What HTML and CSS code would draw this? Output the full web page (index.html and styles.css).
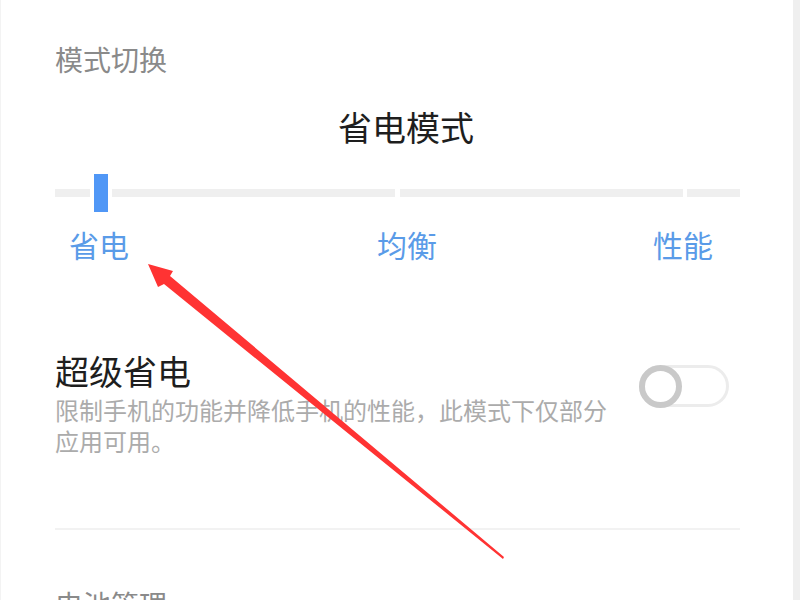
FILE: index.html
```html
<!DOCTYPE html>
<html lang="zh-CN">
<head>
    <meta charset="UTF-8">
    <meta name="viewport" content="width=device-width, initial-scale=1.0">
    <title>省电模式</title>
    <link rel="stylesheet" href="styles.css">
</head>
<body>
    <div class="page">
        <div class="section-title">模式切换</div>

        <div class="mode-name">省电模式</div>

        <div class="slider">
            <div class="track">
                <span class="seg seg-start"></span>
                <span class="thumb"></span>
                <span class="seg seg-a"></span>
                <span class="seg seg-b"></span>
                <span class="seg seg-c"></span>
            </div>
            <div class="labels">
                <span class="label-save">省电</span>
                <span class="label-balance">均衡</span>
                <span class="label-perf">性能</span>
            </div>
        </div>

        <div class="option">
            <div class="option-text">
                <div class="option-title">超级省电</div>
                <div class="option-desc">限制手机的功能并降低手机的性能，此模式下仅部分应用可用。</div>
            </div>
            <div class="switch">
                <span class="knob"></span>
            </div>
        </div>

        <div class="divider"></div>

        <div class="section-title section-bottom">电池管理</div>
    </div>

    <!-- annotation arrow drawn over the screenshot -->
    <svg class="arrow" width="800" height="600" viewBox="0 0 800 600">
        <polygon fill="#ff3333" points="148,264 173,271 170,276 504,557 503,559 164,284 158,287"/>
    </svg>
</body>
</html>
```

FILE: styles.css
```css
* {
    margin: 0;
    padding: 0;
    box-sizing: border-box;
}

body {
    font-family: "Noto Sans CJK SC", "Noto Sans", sans-serif;
    background: white;
    width: 800px;
    height: 600px;
    overflow: hidden;
    position: relative;
}

.page {
    width: 800px;
    height: 600px;
    border-left: 1px solid #f3f3f3;
    border-right: 7px solid #efefef;
    padding: 0 53px 0 54px;
}

.section-title {
    font-size: 28px;
    line-height: 40px;
    color: #8a8a8a;
    padding-top: 39px;
}

.mode-name {
    text-align: center;
    font-size: 34px;
    line-height: 48px;
    color: #1e1e1e;
    padding-left: 17px;
    margin-top: 24px;
}

.slider {
    margin-top: 23px;
}

.track {
    display: flex;
    align-items: center;
    height: 38px;
}

.seg {
    height: 8px;
    background: #efefef;
}

.seg-start {
    width: 35px;
}

.thumb {
    width: 22px;
    height: 38px;
    background: #5097f6;
    border-left: 4px solid white;
    border-right: 4px solid white;
}

.seg-a {
    width: 283px;
    margin-right: 5px;
}

.seg-b {
    width: 283px;
    margin-right: 4px;
}

.seg-c {
    flex: 1;
}

.labels {
    display: flex;
    padding-left: 14px;
    margin-top: 12px;
    font-size: 30px;
    line-height: 40px;
    color: #5a9be8;
}

.label-balance {
    margin-left: 248px;
}

.label-perf {
    margin-left: 216px;
}

.option {
    display: flex;
    align-items: flex-start;
    margin-top: 85px;
}

.option-text {
    flex: 1;
}

.option-title {
    font-size: 34px;
    line-height: 44px;
    color: #1e1e1e;
}

.option-desc {
    width: 560px;
    margin-top: 1px;
    font-size: 24px;
    line-height: 31px;
    color: #ababab;
}

.switch {
    width: 90px;
    height: 42px;
    border: 3px solid #ececec;
    border-radius: 21px;
    margin-top: 16px;
    margin-right: 11px;
    display: flex;
    align-items: center;
    background: white;
}

.knob {
    width: 43px;
    height: 43px;
    border: 6px solid #c9c9c9;
    border-radius: 50%;
    background: white;
    margin-left: -3px;
}

.divider {
    height: 2px;
    background: #f2f2f2;
    margin-top: 72px;
}

.section-bottom {
    padding-top: 54px;
}

.arrow {
    position: absolute;
    left: 0;
    top: 0;
}
```
